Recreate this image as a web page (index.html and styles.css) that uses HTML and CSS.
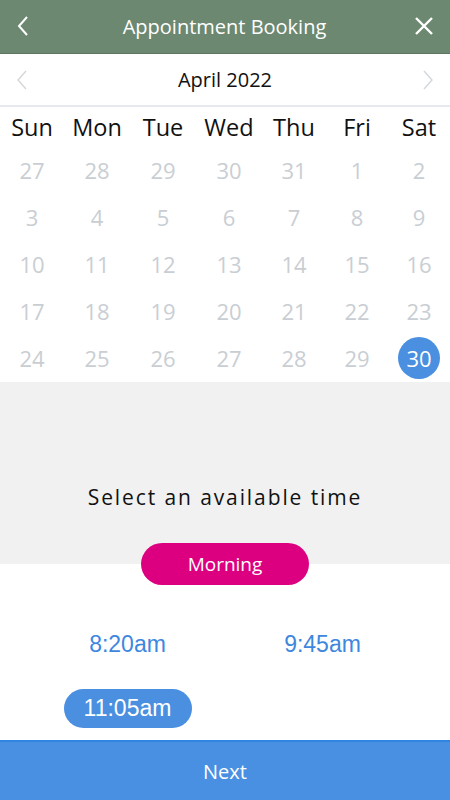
FILE: index.html
```html
<!DOCTYPE html>
<html lang="en">
<head>
  <meta charset="UTF-8" />
  <meta name="viewport" content="width=device-width, initial-scale=1.0"/>
  <title>Appointment Booking</title>
  <link rel="stylesheet" href="styles.css">
</head>
<body>
  <header class="topbar">
    <button class="icon-btn" aria-label="Back">
      <svg width="14" height="24" viewBox="0 0 14 24"><path d="M11 3 L3 12 L11 21" fill="none" stroke="#fff" stroke-width="2"/></svg>
    </button>
    <div class="title">Appointment Booking</div>
    <button class="icon-btn" aria-label="Close">
      <svg width="20" height="20" viewBox="0 0 20 20"><path d="M2 2 L18 18 M18 2 L2 18" fill="none" stroke="#fff" stroke-width="2.4"/></svg>
    </button>
  </header>

  <div class="month-nav">
    <button class="nav-btn" aria-label="Previous month">
      <svg width="12" height="22" viewBox="0 0 12 22"><path d="M10 2 L2 11 L10 20" fill="none" stroke="#d3d7dc" stroke-width="1.4"/></svg>
    </button>
    <div class="month">April 2022</div>
    <button class="nav-btn" aria-label="Next month">
      <svg width="12" height="22" viewBox="0 0 12 22"><path d="M2 2 L10 11 L2 20" fill="none" stroke="#d3d7dc" stroke-width="1.4"/></svg>
    </button>
  </div>

  <div class="weekdays">
    <span>Sun</span><span>Mon</span><span>Tue</span><span>Wed</span><span>Thu</span><span>Fri</span><span>Sat</span>
  </div>

  <div class="days">
    <span>27</span><span>28</span><span>29</span><span>30</span><span>31</span><span>1</span><span>2</span>
    <span>3</span><span>4</span><span>5</span><span>6</span><span>7</span><span>8</span><span>9</span>
    <span>10</span><span>11</span><span>12</span><span>13</span><span>14</span><span>15</span><span>16</span>
    <span>17</span><span>18</span><span>19</span><span>20</span><span>21</span><span>22</span><span>23</span>
    <span>24</span><span>25</span><span>26</span><span>27</span><span>28</span><span>29</span><span><b class="selected">30</b></span>
  </div>

  <section class="time-panel">
    <h2>Select an available time</h2>
    <div class="period">Morning</div>
  </section>

  <div class="times">
    <div class="slot">8:20am</div>
    <div class="slot">9:45am</div>
    <div class="slot"><span class="active">11:05am</span></div>
  </div>

  <button class="next-btn">Next</button>
</body>
</html>
```

FILE: styles.css
```css
/* Reset */
* {
  box-sizing: border-box;
  margin: 0;
  padding: 0;
  font-family: 'Open Sans', sans-serif;
}

body {
  background-color: #fff;
  width: 450px;
  height: 800px;
  display: flex;
  flex-direction: column;
  overflow: hidden;
}

button {
  background: none;
  border: none;
  cursor: pointer;
}

/* Encabezado */
.topbar {
  height: 54px;
  background-color: #6c8871;
  border-bottom: 1px solid #5d7862;
  display: flex;
  align-items: center;
  justify-content: space-between;
  padding: 0 14px 0 11px;
}

.icon-btn {
  display: flex;
  width: 24px;
  justify-content: center;
}

.title {
  color: #fff;
  font-size: 20px;
  padding-left: 2px;
}

/* Mes */
.month-nav {
  height: 53px;
  display: flex;
  align-items: center;
  justify-content: space-between;
  padding: 0 16px;
  border-bottom: 2px solid #e6e9ed;
}

.nav-btn {
  display: flex;
  padding-top: 2px;
}

.month {
  font-size: 20px;
  color: #111;
  padding-top: 1px;
}

/* Calendario */
.weekdays,
.days {
  display: grid;
  grid-template-columns: 64px 66px 66px 66px 64px 62px 62px;
  text-align: center;
}

.weekdays span {
  height: 40px;
  line-height: 40px;
  font-size: 23.5px;
  color: #111;
}

.days span {
  height: 47px;
  display: flex;
  align-items: center;
  justify-content: center;
  font-size: 22px;
  color: #c9ced3;
}

.days .selected {
  width: 42px;
  height: 42px;
  border-radius: 50%;
  background-color: #4a8fe0;
  color: #fff;
  font-weight: normal;
  display: flex;
  align-items: center;
  justify-content: center;
}

/* Panel de horario */
.time-panel {
  height: 183px;
  background-color: #f1f1f1;
  display: flex;
  flex-direction: column;
  align-items: center;
  justify-content: flex-end;
}

.time-panel h2 {
  font-size: 21px;
  font-weight: normal;
  letter-spacing: 1.9px;
  color: #111;
  margin-bottom: 32px;
}

.period {
  width: 168px;
  height: 42px;
  line-height: 42px;
  border-radius: 21px;
  background-color: #dc0080;
  color: #fff;
  font-size: 19px;
  text-align: center;
  margin-bottom: -21px;
  position: relative;
}

.times {
  flex: 1;
  display: grid;
  grid-template-columns: 195px 195px;
  grid-auto-rows: 64px;
  padding: 48px 30px 0;
}

.slot {
  display: flex;
  align-items: center;
  justify-content: center;
  font-family: 'Liberation Sans', Arial, sans-serif;
  font-size: 23px;
  color: #3d87df;
}

.slot .active {
  font-family: 'Liberation Sans', Arial, sans-serif;
  background-color: #4a8fe0;
  color: #fff;
  width: 128px;
  height: 39px;
  line-height: 39px;
  border-radius: 20px;
  text-align: center;
}

.next-btn {
  height: 60px;
  background-color: #4a90e2;
  border-top: 2px solid #2f86e2;
  color: #fff;
  font-size: 20px;
  width: 100%;
}
```
